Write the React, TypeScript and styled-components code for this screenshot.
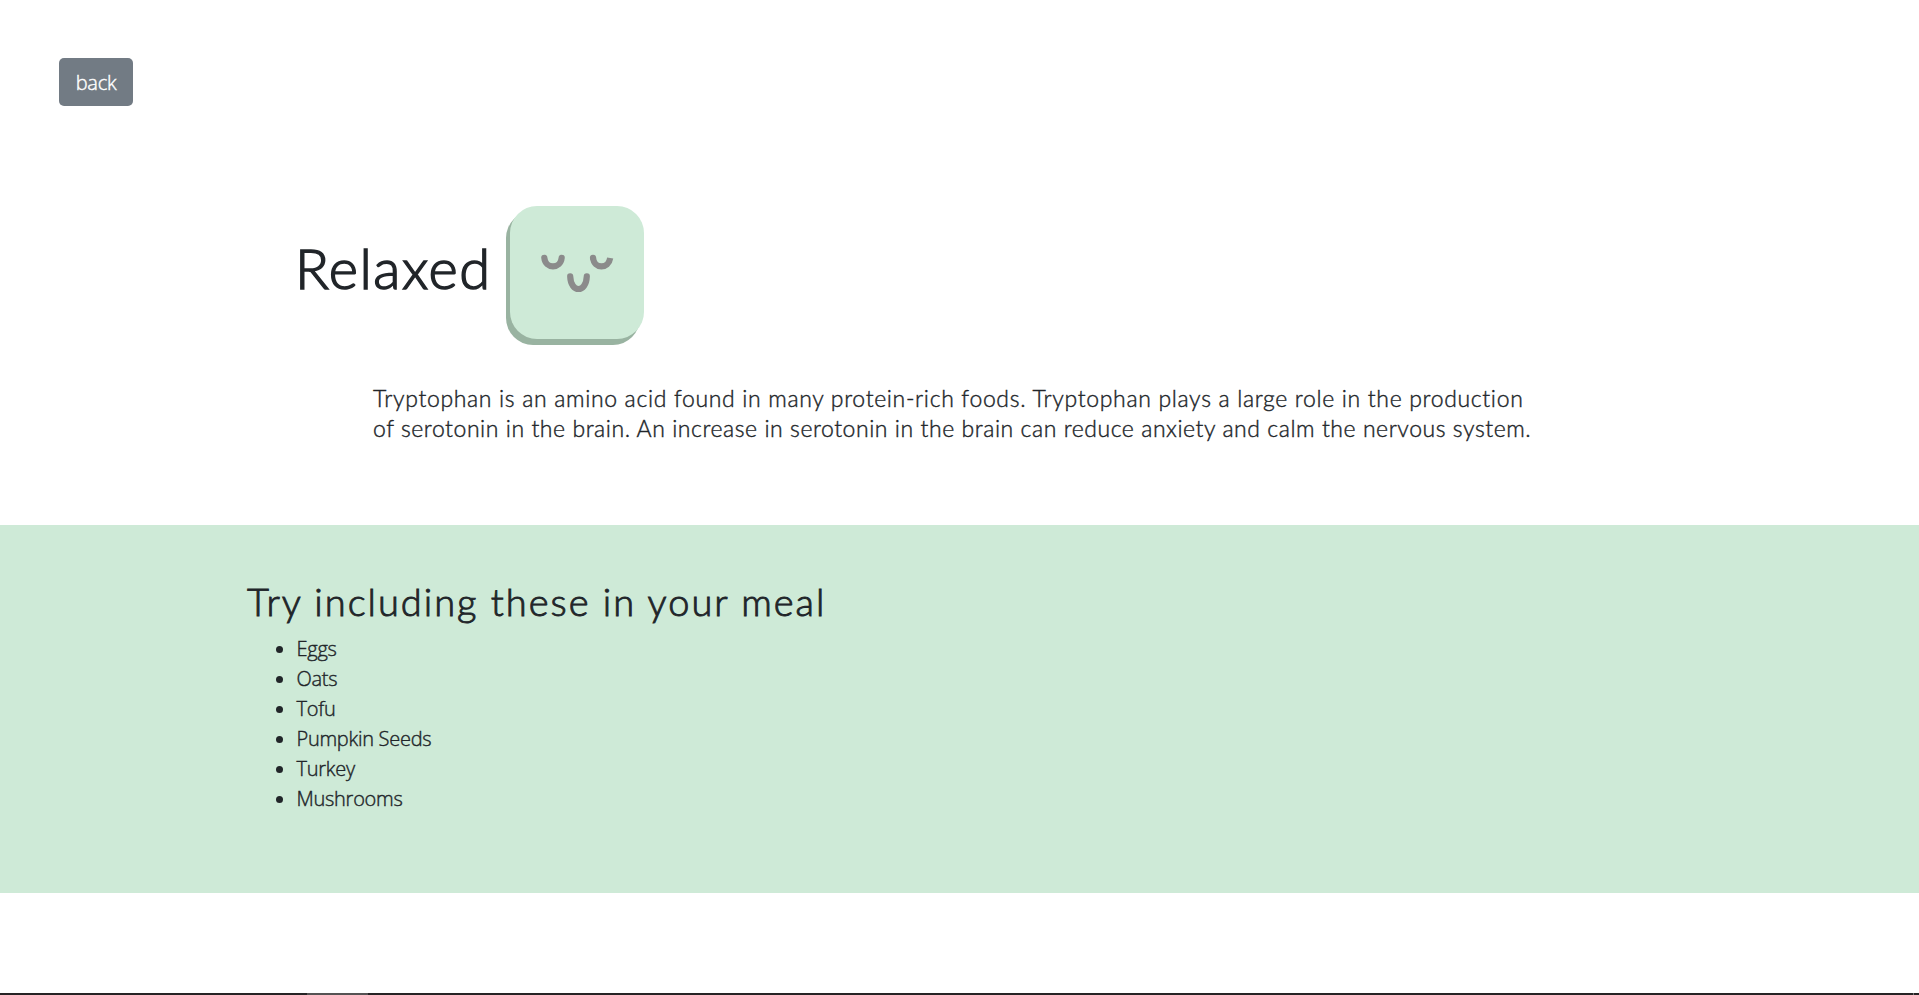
import React from 'react';
import styled, { createGlobalStyle } from 'styled-components';

const colors = {
  ink: '#212529',
  mint: '#ceead7',
  mintShade: '#99b3a1',
  face: '#8b8b8b',
  button: '#727b84',
};

const GlobalStyle = createGlobalStyle`
  *, *::before, *::after { box-sizing: border-box; }
  html, body { margin: 0; background: #fff; }
  body {
    color: ${colors.ink};
    font-family: "Open Sans", "Noto Sans", sans-serif;
    font-size: 20px;
    font-weight: 300;
    line-height: 30px;
    letter-spacing: -0.27px;
    -webkit-text-stroke: 0.4px currentColor;
  }
`;

const Page = styled.div`
  display: flex;
  flex-direction: column;
  height: 995px;
  overflow: hidden;
`;

const TopBar = styled.nav`
  display: flex;
  padding: 58px 59px 0;
`;

const BackButton = styled.button`
  width: 74px;
  height: 48px;
  padding: 1px 0 0;
  border: 0;
  border-radius: 5px;
  background: ${colors.button};
  color: #fff;
  font: inherit;
  letter-spacing: inherit;
`;

const MoodHeader = styled.header`
  display: flex;
  align-items: center;
  gap: 16px;
  padding: 100px 0 0 295px;
`;

const MoodTitle = styled.h1`
  width: 195px;
  margin: 0 0 16px;
  font: 300 56px/67px Lato, sans-serif;
  letter-spacing: 1.5px;
  white-space: nowrap;
  -webkit-text-stroke-width: 1.5px;
`;

const Face = styled.svg`
  display: block;
  flex: none;
  width: 138px;
  height: 139px;
`;

const Description = styled.p`
  margin: 0;
  padding: 38px 0 82px 373px;
  font: 300 23px/30px Lato, sans-serif;
  white-space: nowrap;
`;

const Line = styled.span<{ $tracking: number }>`
  display: block;
  letter-spacing: ${({ $tracking }) => $tracking}px;
`;

const MealSection = styled.section`
  height: 368px;
  padding: 54px 0 0 247px;
  background: ${colors.mint};
`;

const MealTitle = styled.h2`
  margin: 0 0 11px;
  font: 300 38px/44px Lato, sans-serif;
  letter-spacing: 2px;
  -webkit-text-stroke-width: 0.9px;
`;

const FoodList = styled.ul`
  margin: 0;
  padding: 0 0 0 29px;
  list-style: none;
`;

const Food = styled.li`
  display: flex;
  align-items: center;
  gap: 13.5px;

  &::before {
    content: '';
    width: 7px;
    height: 7px;
    margin-top: 1px;
    border-radius: 50%;
    background: ${colors.ink};
  }
`;

const BottomEdge = styled.footer`
  display: flex;
  height: 2px;
  margin-top: auto;
  padding-left: 307px;
  background: #262425;
`;

const ActiveTab = styled.span`
  width: 61px;
  background: #555354;
`;

const EdgeDivider = styled.span`
  width: 1px;
  margin: 0 5px 0 auto;
  background: #777;
`;

const foods = ['Eggs', 'Oats', 'Tofu', 'Pumpkin Seeds', 'Turkey', 'Mushrooms'];

function RelaxedFace() {
  return (
    <Face viewBox="0 0 138 139" aria-hidden="true">
      <rect x="0" y="5" width="134" height="134" rx="27" fill={colors.mintShade} />
      <rect x="4" y="0" width="134" height="133" rx="27" fill={colors.mint} />
      <g fill="none" stroke={colors.face} strokeWidth="6.2">
        <path d="M38.3 51.8C39.5 63.3 54.5 63.3 55.7 51.8" strokeLinecap="round" />
        <path d="M87 51.8C88.2 63.3 102.4 63.3 104.2 52" />
        <path d="M64.2 70.4C64.8 87.2 80.2 87.2 80.8 70.4" strokeLinecap="round" />
      </g>
      <circle cx="87" cy="51.8" r="3.1" fill={colors.face} />
    </Face>
  );
}

export default function App() {
  return (
    <>
      <GlobalStyle />
      <Page>
        <TopBar>
          <BackButton>back</BackButton>
        </TopBar>
        <MoodHeader>
          <MoodTitle>Relaxed</MoodTitle>
          <RelaxedFace />
        </MoodHeader>
        <Description>
          <Line $tracking={0.66}>
            Tryptophan is an amino acid found in many protein-rich foods. Tryptophan plays a large role in the production
          </Line>
          <Line $tracking={0.555}>
            of serotonin in the brain. An increase in serotonin in the brain can reduce anxiety and calm the nervous system.
          </Line>
        </Description>
        <MealSection>
          <MealTitle>Try including these in your meal</MealTitle>
          <FoodList>
            {foods.map((food) => (
              <Food key={food}>{food}</Food>
            ))}
          </FoodList>
        </MealSection>
        <BottomEdge>
          <ActiveTab />
          <EdgeDivider />
        </BottomEdge>
      </Page>
    </>
  );
}
